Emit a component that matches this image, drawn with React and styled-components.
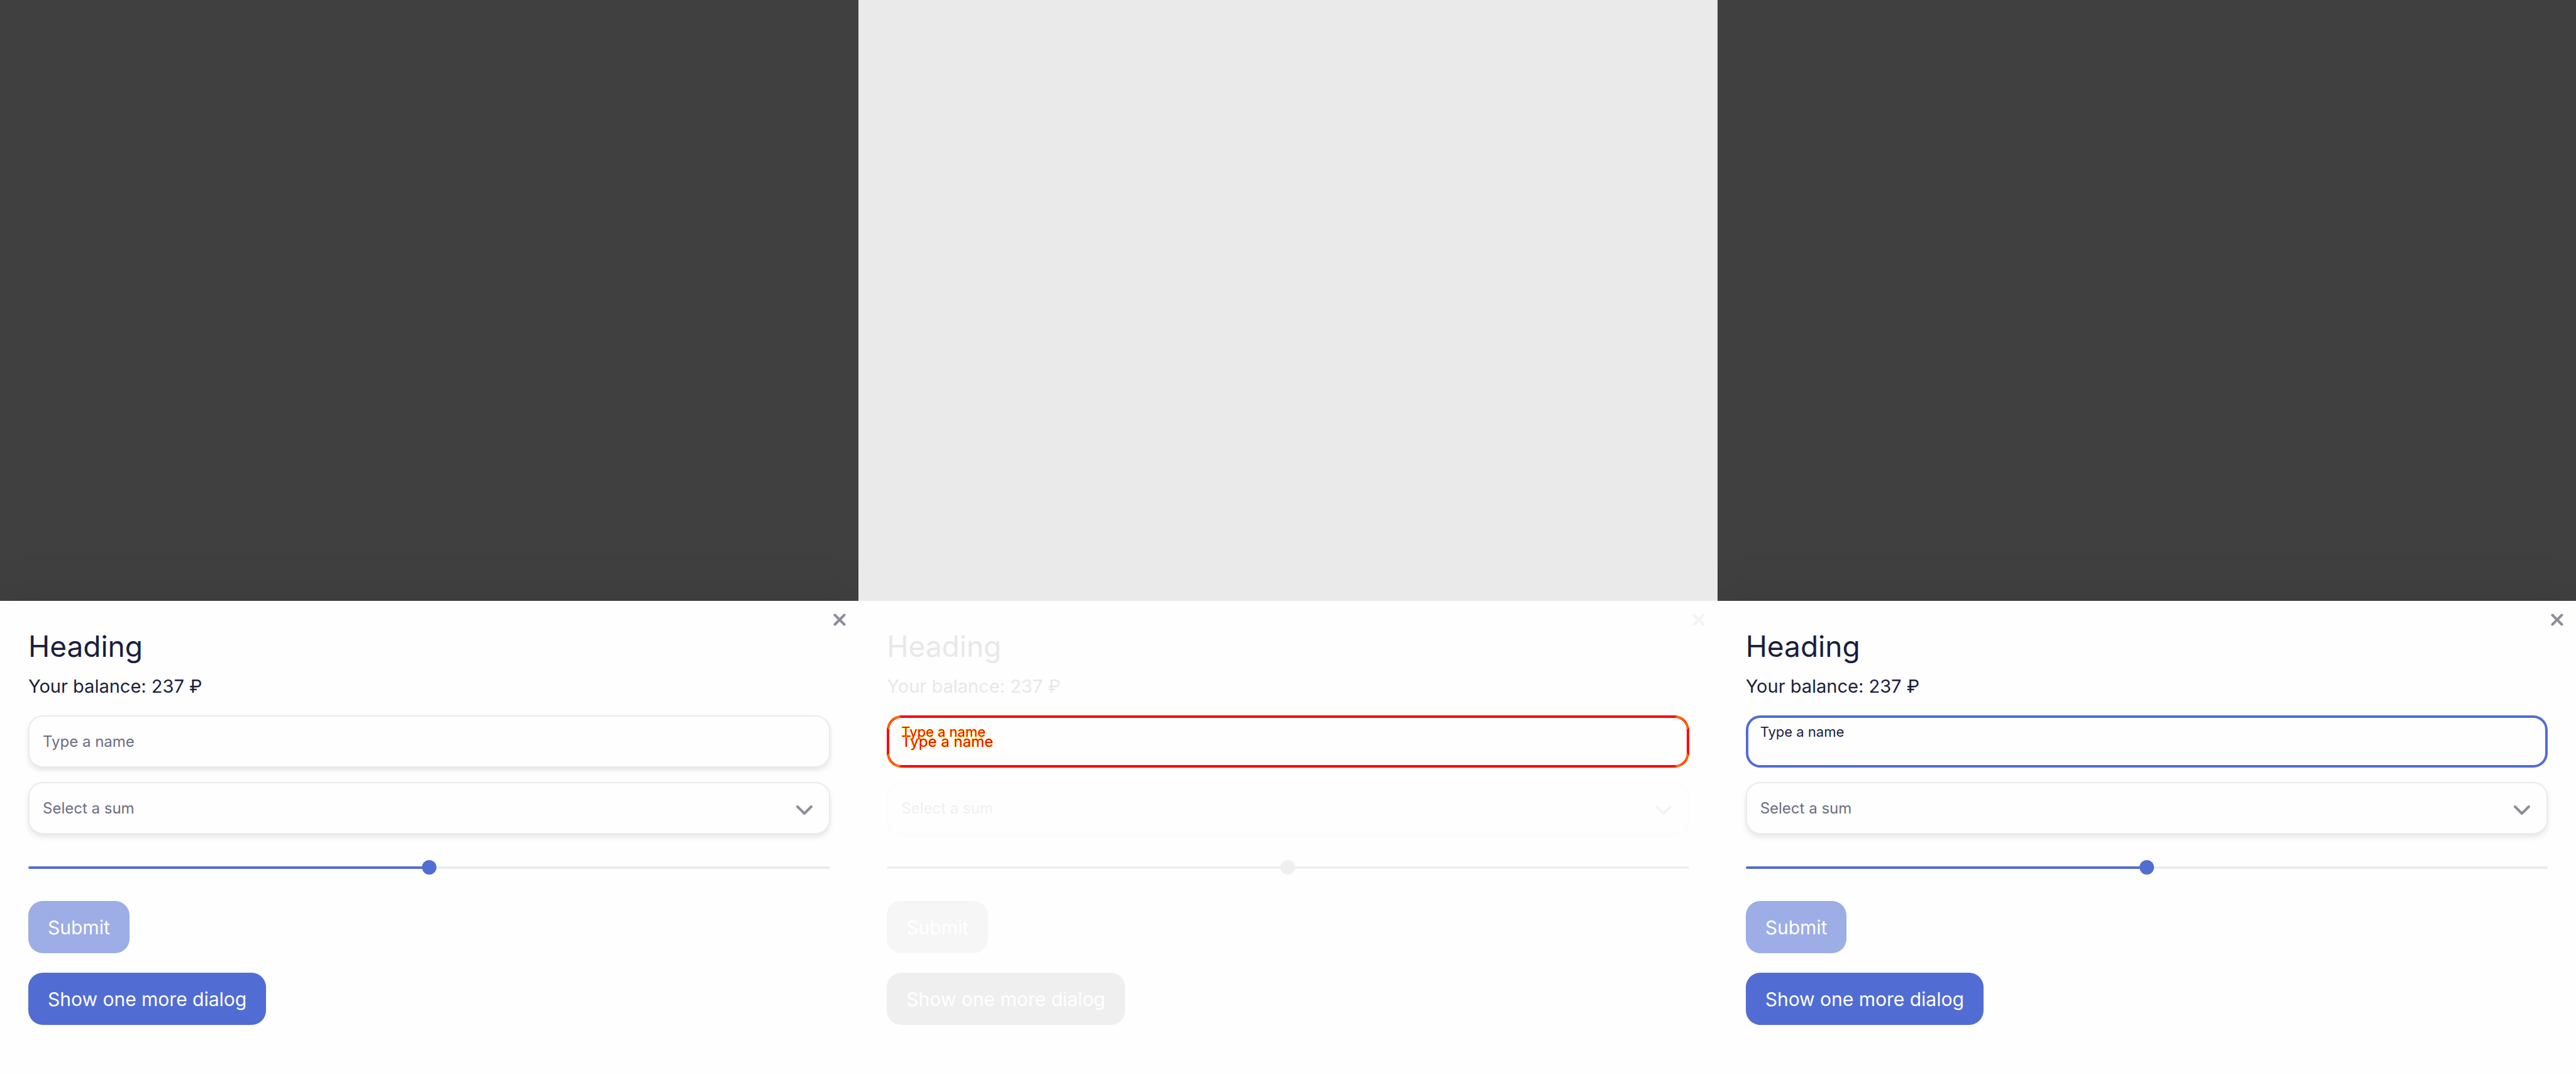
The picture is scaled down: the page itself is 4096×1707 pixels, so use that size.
import React, { useId } from "react";
import styled, { createGlobalStyle, css } from "styled-components";

const themes = {
  normal: {
    backdrop: "#404040",
    text: "#1b1e3c",
    muted: "#6c6d84",
    icon: "#8c8c9c",
    primary: "#516dd3",
    disabled: "#9dade6",
    line: "#ebebeb",
    track: "#ebebeb",
    shadow: "0 4px 8px rgba(0, 0, 0, 0.1)",
    lift: "0 0 76px rgba(0, 0, 0, 0.1)",
  },
  faded: {
    backdrop: "#eaeaea",
    text: "#e8e8e8",
    muted: "#f0f0f0",
    icon: "#f3f3f3",
    primary: "#efefef",
    disabled: "#f6f6f6",
    line: "#fcfcfc",
    track: "#efefef",
    shadow: "0 4px 8px rgba(0, 0, 0, 0.01)",
    lift: "none",
  },
};

const GlobalStyle = createGlobalStyle`
  *, *::before, *::after { box-sizing: border-box; }
  body { margin: 0; background: #ffffff; }
  body, button, input, select { font-family: Inter, "Noto Sans", sans-serif; }
`;

const Page = styled.main`
  display: grid;
  grid-template-columns: repeat(3, 1fr);
  min-height: 100vh;
`;

const Screen = styled.section`
  display: flex;
  flex-direction: column;
  justify-content: flex-end;
  overflow: hidden;
  background: ${(p) => p.$t.backdrop};
`;

const Dialog = styled.form`
  position: relative;
  display: flex;
  flex-direction: column;
  align-items: flex-start;
  padding: 44px 45px 78px;
  background: #fefefe;
  box-shadow: ${(p) => p.$t.lift};
`;

const CloseButton = styled.button`
  position: absolute;
  top: 16px;
  right: 16px;
  display: flex;
  padding: 4px;
  border: 0;
  background: none;
  color: ${(p) => p.$t.icon};
`;

const Heading = styled.h1`
  margin: 0 0 16px;
  color: ${(p) => p.$t.text};
  font-size: 46px;
  font-weight: 400;
  line-height: 56px;
`;

const Balance = styled.p`
  margin: 0 0 26px;
  color: ${(p) => p.$t.text};
  font-size: 29px;
  line-height: 40px;
`;

const Field = styled.div`
  position: relative;
  width: 100%;
  margin-bottom: 23px;
`;

const controlStyle = css`
  display: block;
  width: 100%;
  height: 83px;
  margin: 0;
  padding: 0 21px;
  border: 2px solid ${(p) => p.$t.line};
  border-radius: 23px;
  outline: 0;
  background: #fefefe;
  box-shadow: ${(p) => p.$t.shadow};
  color: ${(p) => p.$t.muted};
  font-size: 24px;
`;

const markedText = css`
  color: #ff0000;
  -webkit-text-stroke: 1px #ffff00;
  paint-order: stroke fill;
`;

const TextInput = styled.input`
  ${controlStyle}
  &::placeholder { color: ${(p) => p.$t.muted}; opacity: 1; }
  ${(p) => p.$state === "focused" && css`
    padding: 24px 19px 0;
    border: 4px solid ${p.$t.primary};
    box-shadow: none;
  `}
  ${(p) => p.$state === "changed" && css`
    padding: 0 19px;
    border: 4px solid #ff0000;
    ${markedText}
    &::placeholder { color: #ff0000; }
  `}
`;

const FloatingLabel = styled.label`
  position: absolute;
  top: 13px;
  left: 23px;
  color: ${(p) => p.$t.text};
  font-size: 22px;
  line-height: 26px;
  ${(p) => p.$state === "changed" && markedText}
`;

const corner = "linear-gradient(#000 0 0)";

const CornerMarks = styled.span`
  position: absolute;
  inset: ${(p) => p.$inset}px;
  border: 1px solid #ffff00;
  border-radius: ${(p) => 23 - p.$inset}px;
  pointer-events: none;
  mask:
    ${corner} 0 0 / 20px 20px no-repeat,
    ${corner} 100% 0 / 20px 20px no-repeat,
    ${corner} 0 100% / 20px 20px no-repeat,
    ${corner} 100% 100% / 20px 20px no-repeat;
`;

const Select = styled.select`
  ${controlStyle}
  appearance: none;
`;

const Chevron = styled.svg`
  position: absolute;
  top: 28px;
  right: 26px;
  color: ${(p) => p.$t.icon};
  pointer-events: none;
`;

const Slider = styled.input`
  appearance: none;
  width: 100%;
  height: 23px;
  margin: 18px 0 42px;
  background: none;

  &::-webkit-slider-runnable-track {
    height: 4px;
    border-radius: 2px;
    background: linear-gradient(to right, ${(p) => p.$t.primary} 50%, ${(p) => p.$t.track} 50%);
  }
  &::-webkit-slider-thumb {
    appearance: none;
    width: 23px;
    height: 23px;
    margin-top: -10px;
    border-radius: 50%;
    background: ${(p) => p.$t.primary};
  }
`;

const Button = styled.button`
  height: 83px;
  padding: 0 31px;
  border: 0;
  border-radius: 23px;
  background: ${(p) => p.$t.primary};
  color: #ffffff;
  font-size: 30px;
  & + & { margin-top: 31px; }
  &:disabled { background: ${(p) => p.$t.disabled}; }
`;

function NameField({ t, state }) {
  const id = useId();
  const floated = state !== "resting";
  return (
    <Field>
      <TextInput
        id={id}
        type="text"
        $t={t}
        $state={state}
        aria-label="Type a name"
        placeholder={state === "focused" ? undefined : "Type a name"}
      />
      {floated && <FloatingLabel htmlFor={id} $t={t} $state={state}>Type a name</FloatingLabel>}
      {state === "changed" && (
        <>
          <CornerMarks $inset={0} />
          <CornerMarks $inset={2} />
        </>
      )}
    </Field>
  );
}

function DialogScreen({ theme, state }) {
  const t = themes[theme];
  return (
    <Screen $t={t}>
      <Dialog $t={t} onSubmit={(e) => e.preventDefault()}>
        <CloseButton type="button" aria-label="Close" $t={t}>
          <svg width="20" height="20" viewBox="0 0 20 20" fill="none" stroke="currentColor" strokeWidth="4" strokeLinecap="round">
            <path d="M2.5 2.5l15 15M17.5 2.5l-15 15" />
          </svg>
        </CloseButton>
        <Heading $t={t}>Heading</Heading>
        <Balance $t={t}>Your balance: 237 ₽</Balance>
        <NameField t={t} state={state} />
        <Field>
          <Select aria-label="Select a sum" $t={t}>
            <option>Select a sum</option>
          </Select>
          <Chevron $t={t} width="30" height="30" viewBox="0 0 30 30" fill="none" stroke="currentColor" strokeWidth="4" strokeLinecap="round" strokeLinejoin="round">
            <path d="M4 11l11 11l11-11" />
          </Chevron>
        </Field>
        <Slider type="range" aria-label="Sum" min="0" max="100" defaultValue="50" $t={t} />
        <Button type="submit" disabled $t={t}>Submit</Button>
        <Button type="button" $t={t}>Show one more dialog</Button>
      </Dialog>
    </Screen>
  );
}

export default function App() {
  return (
    <>
      <GlobalStyle />
      <Page>
        <DialogScreen theme="normal" state="resting" />
        <DialogScreen theme="faded" state="changed" />
        <DialogScreen theme="normal" state="focused" />
      </Page>
    </>
  );
}
